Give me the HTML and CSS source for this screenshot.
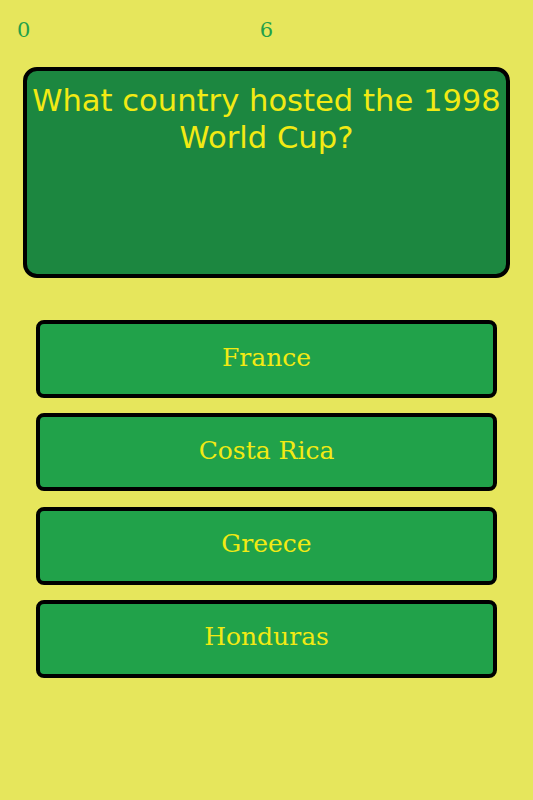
FILE: index.html
```html
<!DOCTYPE html>
<html>
<head>
    <meta charset="UTF-8">
    <meta name="viewport" content="width=device-width, initial-scale=1.0">
    <title>Trivia</title>
    <link rel="stylesheet" href="styles.css">
</head>
<body>
    <div class="score-bar">
        <span class="score">0</span>
        <span class="timer">6</span>
    </div>

    <div class="question-box">
        <p class="question">What country hosted the 1998 World Cup?</p>
    </div>

    <div class="answers">
        <button class="answer-button">France</button>
        <button class="answer-button">Costa Rica</button>
        <button class="answer-button">Greece</button>
        <button class="answer-button">Honduras</button>
    </div>
</body>
</html>
```

FILE: styles.css
```css
:root {
    --background-color: #e6e65c;
    --question-color: #1c8740;
    --button-color: #21a24a;
    --text-color: #f2ea14;
    --score-color: #22a04a;
}

* {
    box-sizing: border-box;
    margin: 0;
    padding: 0;
}

body {
    background-color: var(--background-color);
    min-height: 100vh;
    padding: 12px 23px 0;
}

.score-bar {
    position: relative;
    height: 36px;
    font-family: "DejaVu Serif", serif;
    font-size: 21px;
    color: var(--score-color);
    display: flex;
    align-items: center;
    justify-content: center;
    margin-bottom: 19px;
}

.score {
    position: absolute;
    left: -6px;
}

.question-box {
    background-color: var(--question-color);
    border: 4px solid #000;
    border-radius: 14px;
    height: 211px;
    padding: 11px 2px;
}

.question {
    font-family: "DejaVu Sans", sans-serif;
    font-size: 30.6px;
    line-height: 37px;
    color: var(--text-color);
    text-align: center;
}

.answers {
    display: flex;
    flex-direction: column;
    gap: 15.3px;
    margin: 42px 13px 0;
}

.answer-button {
    background-color: var(--button-color);
    border: 4px solid #000;
    border-radius: 8px;
    height: 78px;
    padding-bottom: 4px;
    font-family: "DejaVu Serif", serif;
    font-size: 25px;
    color: var(--text-color);
    text-align: center;
    width: 100%;
}
```
